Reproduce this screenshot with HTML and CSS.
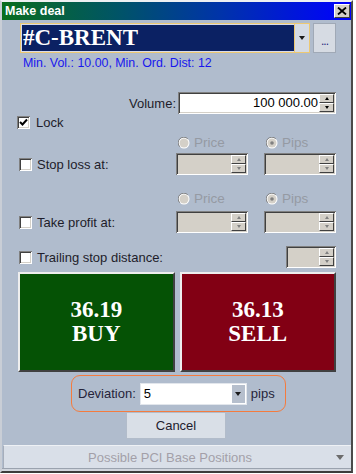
FILE: index.html
```html
<!DOCTYPE html>
<html>
<head>
<meta charset="utf-8">
<link rel="stylesheet" href="styles.css">
</head>
<body>
<div class="window">
  <div class="titlebar">
    <span class="title">Make deal</span>
    <span class="close"><svg width="10" height="8" viewBox="0 0 10 8"><path d="M1 0.5 L9 7.5 M9 0.5 L1 7.5" stroke="#000" stroke-width="1.8" fill="none"/></svg></span>
  </div>
  <div class="content">
    <div class="symbol-row">
      <div class="symbol-combo">
        <div class="symbol-field">#C-BRENT</div>
        <div class="symbol-drop"><span class="arrow-down dark"></span></div>
      </div>
      <div class="more-btn">...</div>
    </div>
    <div class="info">Min. Vol.: 10.00, Min. Ord. Dist: 12</div>
    <div class="volume-row">
      <span class="label">Volume:</span>
      <div class="spin volume">
        <div class="spin-input">100 000.00</div>
        <div class="spin-btns"><span class="sb"><span class="tri-up"></span></span><span class="sb"><span class="tri-down"></span></span></div>
      </div>
    </div>
    <div class="check-row lock">
      <span class="cb"><svg width="9" height="9" viewBox="0 0 9 9"><path d="M1 4 L3.5 6.5 L8 1.5" stroke="#000" stroke-width="2" fill="none"/></svg></span>
      <span class="label">Lock</span>
    </div>

    <div class="radio-row first">
      <span></span>
      <span class="radio"><svg width="12" height="12" viewBox="0 0 12 12"><circle cx="6" cy="6" r="5.5" fill="#fff"/><circle cx="6" cy="6" r="4.5" fill="#d4d0c8"/><path d="M1.8 9.8 A5 5 0 0 1 9.8 1.8" stroke="#808080" stroke-width="1" fill="none"/></svg><span>Price</span></span>
      <span class="radio"><svg width="12" height="12" viewBox="0 0 12 12"><circle cx="6" cy="6" r="5.5" fill="#fff"/><circle cx="6" cy="6" r="4.5" fill="#d4d0c8"/><path d="M1.8 9.8 A5 5 0 0 1 9.8 1.8" stroke="#808080" stroke-width="1" fill="none"/><circle cx="6" cy="6" r="1.8" fill="#808080"/></svg><span>Pips</span></span>
    </div>
    <div class="param-row sl">
      <div class="check-row"><span class="cb"></span><span class="label">Stop loss at:</span></div>
      <div class="spin disabled"><div class="spin-input"></div><div class="spin-btns"><span class="sb"><span class="tri-up"></span></span><span class="sb"><span class="tri-down"></span></span></div></div>
      <div class="spin disabled"><div class="spin-input"></div><div class="spin-btns"><span class="sb"><span class="tri-up"></span></span><span class="sb"><span class="tri-down"></span></span></div></div>
    </div>

    <div class="radio-row second">
      <span></span>
      <span class="radio"><svg width="12" height="12" viewBox="0 0 12 12"><circle cx="6" cy="6" r="5.5" fill="#fff"/><circle cx="6" cy="6" r="4.5" fill="#d4d0c8"/><path d="M1.8 9.8 A5 5 0 0 1 9.8 1.8" stroke="#808080" stroke-width="1" fill="none"/></svg><span>Price</span></span>
      <span class="radio"><svg width="12" height="12" viewBox="0 0 12 12"><circle cx="6" cy="6" r="5.5" fill="#fff"/><circle cx="6" cy="6" r="4.5" fill="#d4d0c8"/><path d="M1.8 9.8 A5 5 0 0 1 9.8 1.8" stroke="#808080" stroke-width="1" fill="none"/><circle cx="6" cy="6" r="1.8" fill="#808080"/></svg><span>Pips</span></span>
    </div>
    <div class="param-row tp">
      <div class="check-row"><span class="cb"></span><span class="label">Take profit at:</span></div>
      <div class="spin disabled"><div class="spin-input"></div><div class="spin-btns"><span class="sb"><span class="tri-up"></span></span><span class="sb"><span class="tri-down"></span></span></div></div>
      <div class="spin disabled"><div class="spin-input"></div><div class="spin-btns"><span class="sb"><span class="tri-up"></span></span><span class="sb"><span class="tri-down"></span></span></div></div>
    </div>

    <div class="trail-row">
      <div class="check-row"><span class="cb"></span><span class="label">Trailing stop distance:</span></div>
      <div class="spin disabled"><div class="spin-input"></div><div class="spin-btns"><span class="sb"><span class="tri-up"></span></span><span class="sb"><span class="tri-down"></span></span></div></div>
    </div>

    <div class="trade-row">
      <div class="trade buy"><span>36.19</span><span>BUY</span></div>
      <div class="trade sell"><span>36.13</span><span>SELL</span></div>
    </div>

    <div class="deviation">
      <span class="dev-label">Deviation:</span>
      <div class="dev-combo"><span class="dev-value">5</span><span class="dev-drop"><span class="arrow-down dark"></span></span></div>
      <span class="dev-label">pips</span>
    </div>

    <div class="cancel">Cancel</div>
  </div>
  <div class="bottom-bar">
    <span class="bottom-text">Possible PCI Base Positions</span>
    <span class="bottom-arrow"></span>
  </div>
  <div class="filler"></div>
</div>
</body>
</html>
```

FILE: styles.css
```css
* { box-sizing: border-box; }
html, body { margin: 0; padding: 0; background: #ffffff; }
body {
  font-family: "Liberation Sans", Arial, sans-serif;
  font-size: 13px;
  color: #1e1c2a;
}
.window {
  width: 353px;
  height: 473px;
  border-top: 2px solid #eef0f2;
  border-left: 2px solid #c9ced6;
  border-right: 2px solid #4a4a4a;
  border-bottom: 2px solid #3c3c3c;
  background: #b0bccd;
  display: flex;
  flex-direction: column;
}
.titlebar {
  height: 18px;
  background: linear-gradient(90deg, #0a6e1e 0%, #005466 33%, #0034a8 62%, #0000ff 100%);
  display: flex;
  align-items: center;
  justify-content: space-between;
  padding-left: 3px;
  padding-right: 1px;
}
.title {
  color: #ffffff;
  font-weight: bold;
  font-size: 12.5px;
}
.close {
  width: 16px;
  height: 14px;
  background: #d4d0c8;
  border: 1px solid;
  border-color: #ffffff #404040 #404040 #ffffff;
  display: flex;
  align-items: center;
  justify-content: center;
}
.content {
  padding: 3px 15px 0 18px;
  display: flex;
  flex-direction: column;
}
.symbol-row {
  display: flex;
  height: 30px;
  gap: 3px;
}
.symbol-combo {
  flex: 1;
  display: flex;
  border: 1px solid #ecc873;
}
.symbol-field {
  flex: 1;
  background: #0b2163;
  border: 1px solid #d8dcea;
  border-right: none;
  color: #ffffff;
  font-family: "Liberation Serif", "Times New Roman", serif;
  font-weight: bold;
  font-size: 23px;
  line-height: 26px;
  padding-left: 1px;
}
.symbol-drop {
  width: 15px;
  background: #d5dbe4;
  border-left: 1px solid #ecc873;
  display: flex;
  align-items: center;
  justify-content: center;
}
.arrow-down {
  width: 0;
  height: 0;
  border-left: 3.5px solid transparent;
  border-right: 3.5px solid transparent;
  border-top: 4px solid #1a1a1a;
}
.more-btn {
  width: 23px;
  background: #d6dbe3;
  border: 1px solid #a0a9b6;
  color: #2a2a80;
  font-size: 12px;
  text-align: center;
  line-height: 34px;
  letter-spacing: -1px;
}
.info {
  margin-top: 3px;
  height: 14px;
  line-height: 14px;
  padding-left: 3px;
  color: #1818ee;
  font-size: 12.4px;
}
.volume-row {
  margin-top: 22px;
  display: flex;
  justify-content: flex-end;
  align-items: center;
  gap: 2px;
}
.label { color: #1e1c2a; white-space: nowrap; }
.spin {
  display: flex;
  height: 22px;
  padding: 2px;
  background: #ffffff;
  border: 0;
  box-shadow: inset 1px 1px 0 #808080, inset -1px -1px 0 #ffffff, inset 2px 2px 0 #404040, inset -2px -2px 0 #d4d0c8;
}
.spin.volume { width: 158px; }
.spin.disabled { background: #d4d0c8; }
.spin-input {
  flex: 1;
  text-align: right;
  line-height: 18px;
  padding-right: 1px;
  color: #000;
}
.spin-btns {
  width: 15px;
  display: flex;
  flex-direction: column;
}
.sb {
  flex: 1;
  background: #d4d0c8;
  border: 1px solid;
  border-color: #ffffff #404040 #404040 #ffffff;
  display: flex;
  align-items: center;
  justify-content: center;
}
.tri-up, .tri-down {
  width: 0;
  height: 0;
  border-left: 2.5px solid transparent;
  border-right: 2.5px solid transparent;
}
.tri-up { border-bottom: 3px solid #000; }
.tri-down { border-top: 3px solid #000; }
.spin.disabled .tri-up { border-bottom-color: #808080; }
.spin.disabled .tri-down { border-top-color: #808080; }
.check-row {
  display: flex;
  align-items: center;
  gap: 5px;
}
.check-row.lock {
  margin-top: 2px;
  height: 13px;
  margin-left: -3px;
  gap: 6px;
}
.cb {
  width: 13px;
  height: 13px;
  flex: none;
  background: #ffffff;
  box-shadow: inset 1px 1px 0 #808080, inset -1px -1px 0 #ffffff, inset 2px 2px 0 #404040, inset -2px -2px 0 #d4d0c8;
  display: flex;
  align-items: center;
  justify-content: center;
}
.radio-row, .param-row {
  display: grid;
  grid-template-columns: 1fr 72px 72px;
  column-gap: 16px;
  align-items: center;
}
.radio-row { height: 14px; }
.radio-row.first { margin-top: 7px; }
.radio-row.second { margin-top: 17px; }
.param-row.sl { margin-top: 3px; }
.param-row.tp { margin-top: 5px; }
.param-row .check-row, .trail-row .check-row { margin-left: -1px; }
.radio {
  display: flex;
  align-items: center;
  gap: 4px;
  padding-left: 2px;
  color: #959aa3;
  font-size: 13.5px;
  line-height: 14px;
}
.radio svg { flex: none; }
.trail-row {
  margin-top: 13px;
  display: grid;
  grid-template-columns: 1fr 50px;
  align-items: center;
}
.trade-row {
  margin-top: 4px;
  margin-left: -2px;
  display: grid;
  grid-template-columns: 1fr 1fr;
  gap: 5px;
}
.trade {
  height: 100px;
  border: 2px solid;
  border-color: #eeeeee #404040 #404040 #eeeeee;
  display: flex;
  flex-direction: column;
  align-items: center;
  justify-content: center;
  color: #ffffff;
  font-family: "Liberation Serif", "Times New Roman", serif;
  font-weight: bold;
  font-size: 23px;
  line-height: 24.5px;
}
.buy { background: #055205; }
.sell { background: #820014; }
.deviation {
  margin-top: 3px;
  margin-left: 51px;
  width: 215px;
  height: 37px;
  border: 1px solid #f47b3e;
  border-radius: 9px;
  display: flex;
  align-items: center;
  padding-left: 6px;
  gap: 4px;
}
.dev-label { color: #26243a; }
.dev-combo {
  width: 107px;
  height: 22px;
  background: #ffffff;
  border: 1px solid #e2e6ec;
  display: flex;
  align-items: stretch;
}
.dev-value {
  flex: 1;
  padding-left: 3px;
  line-height: 20px;
  color: #000;
}
.dev-drop {
  width: 13px;
  margin: 1px;
  background: #b6bfcd;
  display: flex;
  align-items: center;
  justify-content: center;
}
.cancel {
  margin-left: 106px;
  width: 100px;
  height: 27px;
  background: #d9dfe7;
  border: 1px solid #b2bcca;
  text-align: center;
  line-height: 25px;
  color: #1e1c2e;
}
.bottom-bar {
  margin-top: 6px;
  margin-left: 1px;
  height: 23px;
  background: #d9dfe8;
  border-top: 1px solid #eef1f5;
  border-left: 1px solid #a6aebb;
  display: flex;
  align-items: center;
}
.bottom-text {
  flex: 1;
  text-align: center;
  color: #a39fa8;
}
.bottom-arrow {
  width: 0;
  height: 0;
  border-left: 4.5px solid transparent;
  border-right: 4.5px solid transparent;
  border-top: 5px solid #6c6c6c;
  margin-right: 7px;
}
.filler {
  flex: 1;
  background: #d0d5dd;
  border-top: 1px solid #9aa2ae;
}
```
